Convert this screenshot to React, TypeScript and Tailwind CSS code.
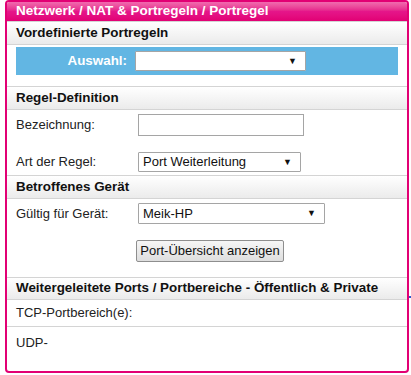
import React from "react";

function SectionHeader({ title, h = "h-[24px]" }: { title: string; h?: string }) {
  return (
    <div
      className={`${h} shrink-0 flex items-center pl-[9px] border-y border-[#d4d4d4] bg-gradient-to-b from-[#ffffff] to-[#ebebeb] text-[13.4px] font-bold text-[#111]`}
    >
      {title}
    </div>
  );
}

function Select({ value, width, h = "h-[20px]" }: { value: string; width: string; h?: string }) {
  return (
    <div
      className={`${width} ${h} flex items-center justify-between border border-[#a5a5a5] bg-white pl-[4px] pr-[8px] text-[13px] text-[#111] rounded-[1px]`}
    >
      <span>{value}</span>
      <span className="text-[9px] leading-none">▼</span>
    </div>
  );
}

export default function App() {
  return (
    <div className="w-[411px] h-[375px] bg-white font-['Liberation_Sans',Arial,sans-serif] relative">
      <div className="ml-[5px] w-[404px] h-[373px] border-2 border-[#e20074] rounded-[4px] overflow-hidden flex flex-col">
        <div className="h-[19px] shrink-0 flex items-center pl-[9px] bg-gradient-to-b from-[#f06aae] via-[#e5158a] to-[#e20074] text-white font-bold text-[13.5px]">
          Netzwerk / NAT &amp; Portregeln / Portregel
        </div>

        <SectionHeader title="Vordefinierte Portregeln" />
        <div className="mx-[9px] mt-[2px] h-[28px] shrink-0 bg-[#62b6e3] flex items-center">
          <span className="w-[119px] pr-[8px] text-right text-white font-bold text-[13.4px]">
            Auswahl:
          </span>
          <Select value="" width="w-[171px]" />
        </div>
        <div className="h-[11px] shrink-0" />

        <SectionHeader title="Regel-Definition" />
        <div className="flex flex-col text-[13px] text-[#222] shrink-0">
          <div className="flex items-center h-[22px] mt-[4px] pl-[9px]">
            <span className="w-[122px]">Bezeichnung:</span>
            <div className="w-[166px] h-[22px] border border-[#a5a5a5] bg-white" />
          </div>
          <div className="flex items-center h-[20px] mt-[16px] pl-[9px]">
            <span className="w-[122px]">Art der Regel:</span>
            <Select value="Port Weiterleitung" width="w-[163px]" />
          </div>
          <div className="h-[3px]" />
        </div>

        <SectionHeader title="Betroffenes Gerät" />
        <div className="flex flex-col text-[13px] text-[#222] shrink-0">
          <div className="flex items-center h-[21px] mt-[4px] pl-[9px]">
            <span className="w-[122px]">Gültig für Gerät:</span>
            <Select value="Meik-HP" width="w-[187px]" h="h-[21px]" />
          </div>
          <div className="flex pl-[129px] mt-[16px]">
            <div className="w-[148px] h-[22px] flex items-center justify-center border border-[#8e8e8e] rounded-[2px] bg-gradient-to-b from-[#f6f6f6] to-[#dedede] text-[13px] text-[#111]">
              Port-Übersicht anzeigen
            </div>
          </div>
          <div className="h-[15px]" />
        </div>

        <SectionHeader h="h-[23px]" title="Weitergeleitete Ports / Portbereiche - Öffentlich &amp; Private" />
        <div className="h-[27px] shrink-0 flex items-center pl-[9px] text-[13px] text-[#222] border-b border-[#d4d4d4]">
          TCP-Portbereich(e):
        </div>
        <div className="h-[31px] shrink-0 flex items-center pl-[9px] text-[13px] text-[#222]">
          UDP-
        </div>
      </div>
      <div className="absolute left-[409px] top-[296px] w-[2px] h-[2px] bg-[#3355cc]" />
    </div>
  );
}
